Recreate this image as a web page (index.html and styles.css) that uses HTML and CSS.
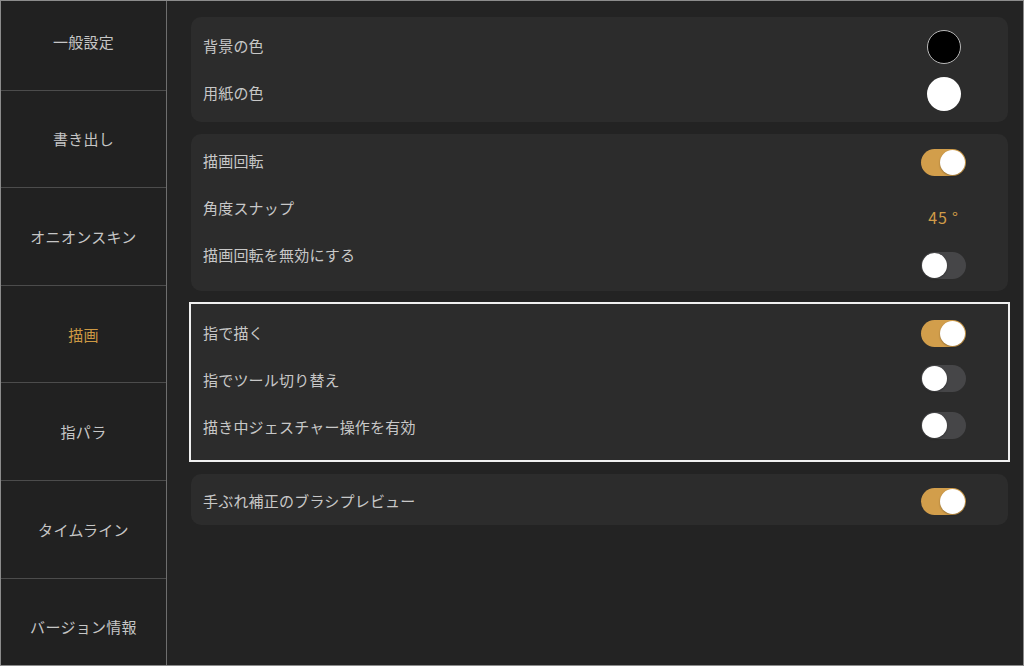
FILE: index.html
```html
<!DOCTYPE html>
<html lang="ja">
<head>
  <meta charset="UTF-8" />
  <meta name="viewport" content="width=device-width, initial-scale=1.0" />
  <title>設定</title>
  <link rel="stylesheet" href="styles.css">
</head>
<body>
  <div class="frame">
    <nav class="sidebar">
      <div class="nav-list">
        <div class="nav-item">一般設定</div>
        <div class="nav-item">書き出し</div>
        <div class="nav-item">オニオンスキン</div>
        <div class="nav-item active">描画</div>
        <div class="nav-item">指パラ</div>
        <div class="nav-item">タイムライン</div>
        <div class="nav-item">バージョン情報</div>
      </div>
    </nav>

    <main class="main">
      <section class="card card-colors">
        <div class="row">
          <span class="label">背景の色</span>
          <span class="ctl"><span class="swatch black"></span></span>
        </div>
        <div class="row">
          <span class="label">用紙の色</span>
          <span class="ctl"><span class="swatch white"></span></span>
        </div>
      </section>

      <section class="card card-rotate">
        <div class="row drop-xs">
          <span class="label">描画回転</span>
          <span class="ctl"><span class="toggle on"><span class="knob"></span></span></span>
        </div>
        <div class="row drop-md">
          <span class="label">角度スナップ</span>
          <span class="ctl"><span class="value">45 °</span></span>
        </div>
        <div class="row drop-lg">
          <span class="label">描画回転を無効にする</span>
          <span class="ctl"><span class="toggle"><span class="knob"></span></span></span>
        </div>
      </section>

      <section class="card card-focus">
        <div class="row">
          <span class="label">指で描く</span>
          <span class="ctl"><span class="toggle on"><span class="knob"></span></span></span>
        </div>
        <div class="row rise">
          <span class="label">指でツール切り替え</span>
          <span class="ctl"><span class="toggle"><span class="knob"></span></span></span>
        </div>
        <div class="row rise">
          <span class="label">描き中ジェスチャー操作を有効</span>
          <span class="ctl"><span class="toggle"><span class="knob"></span></span></span>
        </div>
      </section>

      <section class="card card-single">
        <div class="row">
          <span class="label">手ぶれ補正のブラシプレビュー</span>
          <span class="ctl"><span class="toggle on"><span class="knob"></span></span></span>
        </div>
      </section>
    </main>
  </div>
</body>
</html>
```

FILE: styles.css
```css
body {
  margin: 0;
  padding: 0;
  background: #232323;
  font-family: "Noto Sans CJK JP", "Noto Sans", sans-serif;
  color: #c8c8c8;
}
.frame {
  width: 1024px;
  height: 666px;
  box-sizing: border-box;
  border: 1px solid #8c8c8c;
  display: flex;
  overflow: hidden;
  background: #232323;
}

/* sidebar */
.sidebar {
  width: 165px;
  flex: none;
  background: #212121;
  border-right: 1px solid #6e6e6e;
  overflow: hidden;
}
.nav-list {
  margin-top: -8px;
}
.nav-item {
  height: 96.6px;
  border-bottom: 1px solid #4c4c4c;
  display: flex;
  align-items: center;
  justify-content: center;
  font-size: 15px;
  letter-spacing: 0.3px;
  color: #c6c6c6;
}
.nav-item.active {
  color: #cd9944;
}

/* main */
.main {
  flex: 1;
  padding: 16px 15px 0 24px;
  display: flex;
  flex-direction: column;
  gap: 12px;
}
.card {
  background: #2c2c2c;
  border-radius: 10px;
  padding: 6px 42px 6px 12px;
}
.card-colors {
  padding-bottom: 5px;
}
.card-rotate {
  padding-top: 4px;
  padding-bottom: 12px;
}
.card-focus {
  border-radius: 0;
  outline: 2px solid #f0f0f0;
  margin: 1px 0 2px;
  padding-bottom: 9px;
}
.card-single {
  padding-top: 4px;
  padding-bottom: 0;
}
.row {
  height: 47px;
  display: flex;
  align-items: center;
  justify-content: space-between;
}
.label {
  font-size: 15px;
  letter-spacing: 0.2px;
  color: #c8c8c8;
  margin-top: -2px;
}
.ctl {
  width: 45px;
  display: flex;
  justify-content: center;
}
.drop-xs .ctl { margin-top: 2px; }
.drop-md .ctl { margin-top: 16px; }
.drop-lg .ctl { margin-top: 20px; }
.rise .ctl { margin-bottom: 5px; }

.swatch {
  width: 34px;
  height: 34px;
  border-radius: 50%;
  box-sizing: border-box;
}
.swatch.black {
  background: #000;
  border: 1.5px solid #b8b8b8;
}
.swatch.white {
  background: #fff;
}
.value {
  font-size: 16px;
  color: #d19c48;
  letter-spacing: 0.8px;
  white-space: nowrap;
}
.toggle {
  width: 45px;
  height: 27px;
  border-radius: 14px;
  background: #464648;
  display: flex;
  align-items: center;
  padding: 0 1px;
  box-sizing: border-box;
}
.toggle.on {
  background: #d29e4b;
  justify-content: flex-end;
}
.knob {
  width: 25px;
  height: 25px;
  border-radius: 50%;
  background: #fff;
  box-shadow: 0 1px 2px rgba(0, 0, 0, 0.3);
}
```
